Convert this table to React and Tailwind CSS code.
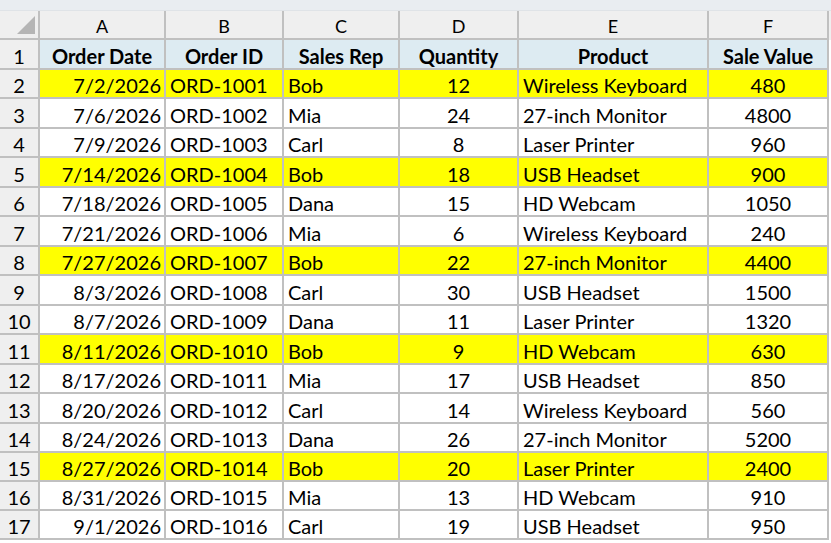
import React from "react";

const rows = [
  ["7/2/2026", "ORD-1001", "Bob", 12, "Wireless Keyboard", 480],
  ["7/6/2026", "ORD-1002", "Mia", 24, "27-inch Monitor", 4800],
  ["7/9/2026", "ORD-1003", "Carl", 8, "Laser Printer", 960],
  ["7/14/2026", "ORD-1004", "Bob", 18, "USB Headset", 900],
  ["7/18/2026", "ORD-1005", "Dana", 15, "HD Webcam", 1050],
  ["7/21/2026", "ORD-1006", "Mia", 6, "Wireless Keyboard", 240],
  ["7/27/2026", "ORD-1007", "Bob", 22, "27-inch Monitor", 4400],
  ["8/3/2026", "ORD-1008", "Carl", 30, "USB Headset", 1500],
  ["8/7/2026", "ORD-1009", "Dana", 11, "Laser Printer", 1320],
  ["8/11/2026", "ORD-1010", "Bob", 9, "HD Webcam", 630],
  ["8/17/2026", "ORD-1011", "Mia", 17, "USB Headset", 850],
  ["8/20/2026", "ORD-1012", "Carl", 14, "Wireless Keyboard", 560],
  ["8/24/2026", "ORD-1013", "Dana", 26, "27-inch Monitor", 5200],
  ["8/27/2026", "ORD-1014", "Bob", 20, "Laser Printer", 2400],
  ["8/31/2026", "ORD-1015", "Mia", 13, "HD Webcam", 910],
  ["9/1/2026", "ORD-1016", "Carl", 19, "USB Headset", 950],
];

const heights = ["h-[30px]", "h-[29px]"];

const cols = "grid grid-cols-[40px_126px_118px_116px_119px_190px_120px]";
const cell = "border-r-2 border-b-2 border-[#c0c0c0] flex items-center overflow-hidden whitespace-nowrap pt-[3px]";

export default function App() {
  return (
    <div
      className="w-[831px] h-[543px] bg-white overflow-hidden text-black"
      style={{ fontFamily: "Lato, 'Noto Sans', sans-serif" }}
    >
      <div className="h-[11px] bg-[#e9edf1] border-b border-[#dfe3e7]" />
      {/* column letters */}
      <div className={`${cols} h-[29px] bg-[#efefef] text-[18px]`}>
        <div className={`${cell} relative`}>
          <svg className="absolute right-[3px] bottom-[4px]" width="18" height="18" viewBox="0 0 18 18">
            <polygon points="18,0 18,18 0,18" fill="#b5b5b5" />
          </svg>
        </div>
        {["A", "B", "C", "D", "E", "F"].map((l) => (
          <div key={l} className={`${cell} justify-center`}>{l}</div>
        ))}
      </div>
      {/* header row */}
      <div className={`${cols} h-[30px] text-[20px]`}>
        <div className={`${cell} justify-center bg-[#efefef]`}>1</div>
        {["Order Date", "Order ID", "Sales Rep", "Quantity", "Product", "Sale Value"].map((h) => (
          <div key={h} className={`${cell} justify-center font-bold bg-[#ddebf2]`}>{h}</div>
        ))}
      </div>
      {rows.map((r, i) => {
        const hl = r[2] === "Bob";
        const bg = hl ? "bg-[#ffff00]" : "bg-white";
        const h = i + 1 < 14 ? heights[(i + 1) % 2] : "h-[29px]";
        return (
          <div key={i} className={`${cols} ${h} text-[20px]`}>
            <div className={`${cell} justify-center bg-[#efefef]`}>{i + 2}</div>
            <div className={`${cell} justify-end pr-[3px] ${bg}`}>{r[0]}</div>
            <div className={`${cell} pl-[4px] ${bg}`}>{r[1]}</div>
            <div className={`${cell} pl-[4px] ${bg}`}>{r[2]}</div>
            <div className={`${cell} justify-center ${bg}`}>{r[3]}</div>
            <div className={`${cell} pl-[4px] ${bg}`}>{r[4]}</div>
            <div className={`${cell} justify-center ${bg}`}>{r[5]}</div>
          </div>
        );
      })}
    </div>
  );
}
